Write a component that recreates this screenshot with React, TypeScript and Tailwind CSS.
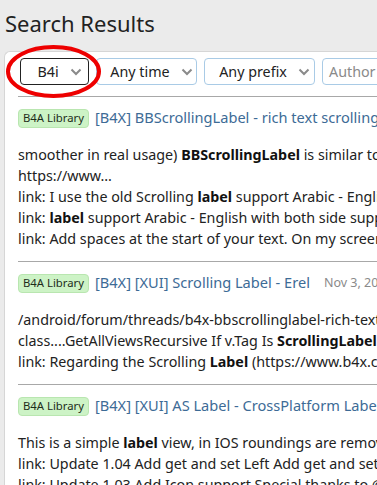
const font = { fontFamily: '"Noto Sans", "Open Sans", sans-serif' };

function Chevron() {
  return (
    <svg width="12" height="8" viewBox="0 0 12 8" className="ml-[11px] shrink-0">
      <path d="M1.5 1.5 L6 6 L10.5 1.5" fill="none" stroke="#8a8a8a" strokeWidth="2" />
    </svg>
  );
}

function Select({ label, focused, width }: { label: string; focused?: boolean; width: string }) {
  return (
    <div
      className={`flex h-[27px] shrink-0 items-center justify-center rounded-[4px] border bg-white pl-[10px] text-[14.3px] text-[#222] ${width} ${
        focused ? "border-[#222]" : "border-[#a9cbe6]"
      }`}
    >
      <span>{label}</span>
      <Chevron />
    </div>
  );
}

function Badge() {
  return (
    <span className="mr-[6px] inline-flex h-[19px] shrink-0 items-center rounded-[4px] border border-[#b9e6b0] bg-[#cdf3c6] px-[4px] text-[11.3px] text-[#1d2d1a]">
      B4A Library
    </span>
  );
}

type Part = string | { b: string };

function Line({ parts }: { parts: Part[] }) {
  return (
    <div className="h-[21px] whitespace-nowrap">
      {parts.map((p, i) => (typeof p === "string" ? <span key={i}>{p}</span> : <b key={i} className="font-bold text-[#111]">{p.b}</b>))}
    </div>
  );
}

function Result({ title, date, lines }: { title: string; date?: string; lines: Part[][] }) {
  return (
    <div className="border-t border-[#a8a8a8] pb-[12px] pt-[10px]">
      <div className="flex h-[22px] items-center whitespace-nowrap">
        <Badge />
        <span className="text-[14.6px] text-[#3d6b96]">{title}</span>
        {date && <span className="ml-[14px] text-[12.5px] text-[#8a8a8a]">{date}</span>}
      </div>
      <div className="mt-[15px] text-[14.3px] leading-[21px] text-[#222]">
        {lines.map((l, i) => (
          <Line key={i} parts={l} />
        ))}
      </div>
    </div>
  );
}

export default function App() {
  return (
    <div className="relative h-[485px] w-[377px] overflow-hidden bg-[#ebebeb]" style={font}>
      <h1 className="px-[5px] pt-[6px] text-[22px] leading-[34px] text-[#222]">Search Results</h1>
      <div className="ml-[4px] mt-[11px] w-[420px] rounded-tl-[6px] border-l border-t border-[#d6d6d6] bg-white pl-[13px]">
        <div className="flex gap-[7px] pb-[11px] pl-[2px] pt-[6px]">
          <Select label="B4i" focused width="w-[69px]" />
          <Select label="Any time" width="w-[101px]" />
          <Select label="Any prefix" width="w-[111px]" />
          <div className="flex h-[27px] w-[100px] shrink-0 items-center rounded-[4px] border border-[#a9cbe6] px-[6px] text-[14.3px] text-[#8a8a8a]">
            Author
          </div>
        </div>
        <Result
          title="[B4X] BBScrollingLabel - rich text scrolling label"
          lines={[
            ["smoother in real usage) ", { b: "BBScrollingLabel" }, " is similar to the"],
            ["https://www..."],
            ["link: I use the old Scrolling ", { b: "label" }, " support Arabic - English"],
            ["link: ", { b: "label" }, " support Arabic - English with both side support"],
            ["link: Add spaces at the start of your text. On my screen"],
          ]}
        />
        <Result
          title="[B4X] [XUI] Scrolling Label - Erel"
          date="Nov 3, 2021"
          lines={[
            ["/android/forum/threads/b4x-bbscrollinglabel-rich-text"],
            ["class....GetAllViewsRecursive If v.Tag Is ", { b: "ScrollingLabel" }, " Then"],
            ["link: Regarding the Scrolling ", { b: "Label" }, " (https://www.b4x.com"],
          ]}
        />
        <Result
          title="[B4X] [XUI] AS Label - CrossPlatform Label - Alexander"
          lines={[
            ["This is a simple ", { b: "label" }, " view, in IOS roundings are removed"],
            ["link: Update 1.04 Add get and set Left Add get and set"],
            ["link: Update 1.03 Add Icon support Special thanks to @"],
          ]}
        />
      </div>
      <svg className="pointer-events-none absolute left-0 top-0" width="120" height="110">
        <ellipse cx="53.5" cy="71.5" rx="45.5" ry="24.5" fill="none" stroke="#ee0000" strokeWidth="4" />
      </svg>
    </div>
  );
}
